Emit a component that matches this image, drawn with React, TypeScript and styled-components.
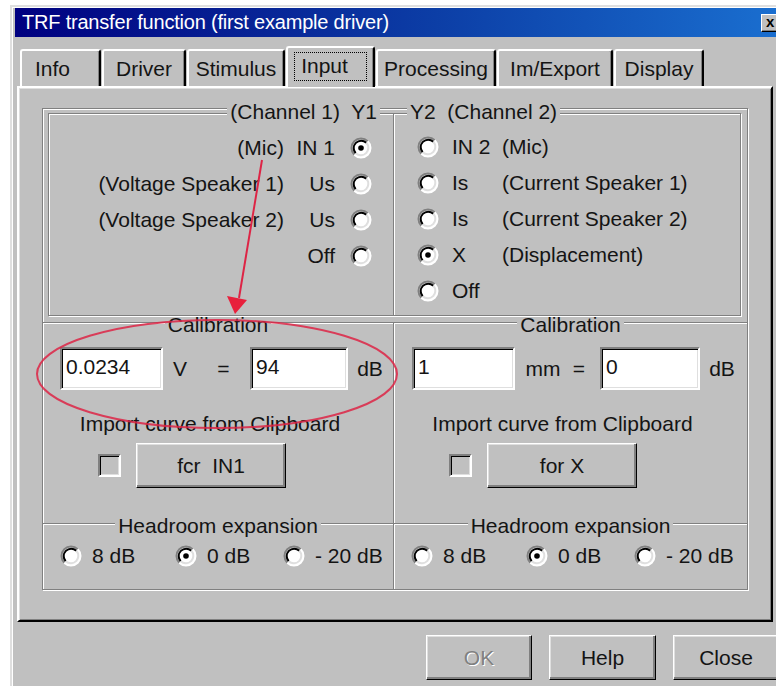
import React from 'react'
import styled, { createGlobalStyle } from 'styled-components'

const FACE = '#c0c0c0'
const SHADOW = '#808080'
const LIGHT = '#dfdfdf'
const INK = '#141414'
const TEXT = '21px'

const GlobalStyle = createGlobalStyle`
  html, body {
    margin: 0;
    padding: 0;
    background: #fff;
    overflow: hidden;
  }
  body {
    font-family: "Liberation Sans", Arial, sans-serif;
    color: ${INK};
  }
`

const Page = styled.div`
  position: relative;
  width: 776px;
  height: 686px;
  overflow: hidden;
`

const Window = styled.div`
  width: 766px;
  height: 680px;
  margin: 5px 0 0 10px;
  padding: 1px 3px;
  background: ${FACE};
  border: 2px solid;
  border-color: ${LIGHT} #000 #000 ${LIGHT};
  box-shadow: inset 1px 1px #fff;
`

const TitleBar = styled.div`
  display: flex;
  align-items: center;
  height: 29px;
  padding: 0 2px 0 7px;
  background: linear-gradient(90deg, #000080 0%, #0c3ea6 55%, #1a6fd0 100%);
  color: #fff;
  font-size: 20px;
  letter-spacing: -0.2px;
`

const CloseBox = styled.div`
  box-sizing: border-box;
  width: 18px;
  height: 18px;
  margin-left: auto;
  display: flex;
  align-items: center;
  justify-content: center;
  background: ${FACE};
  border: 1px solid;
  border-color: #fff #000 #000 #fff;
  box-shadow: inset -1px -1px ${SHADOW};
  color: #000;
  font-size: 15px;
  font-weight: bold;
  line-height: 1;
  padding-bottom: 2px;
`

const TabStrip = styled.div`
  display: flex;
  align-items: flex-end;
  height: 40px;
  margin-top: 9px;
  padding-left: 5px;
`

const Tab = styled.div<{ $w: number; $active?: boolean; $left?: boolean }>`
  box-sizing: border-box;
  position: relative;
  z-index: ${p => (p.$active ? 2 : 0)};
  width: ${p => p.$w}px;
  height: ${p => (p.$active ? 41 : 37)}px;
  margin: 0 1px ${p => (p.$active ? -1 : 0)}px 0;
  padding: 6px 0 0 ${p => (p.$left ? 13 : 0)}px;
  background: ${FACE};
  border: 2px solid;
  border-bottom: none;
  border-color: #fff #000 #000 #fff;
  border-radius: 3px 3px 0 0;
  box-shadow: inset -1px 0 ${SHADOW};
  font-size: ${TEXT};
  line-height: 23px;
  text-align: ${p => (p.$left ? 'left' : 'center')};
  white-space: nowrap;
`

const FocusLabel = styled.span`
  display: inline-block;
  padding: 1px 18px 3px 6px;
  border: 1px dotted #000;
  margin-top: -2px;
`

const TabPage = styled.div`
  box-sizing: border-box;
  width: 756px;
  height: 536px;
  margin-left: 2px;
  padding: 20px 0 0 23px;
  border: 2px solid;
  border-color: #fff #000 #000 #fff;
  box-shadow: inset 1px 1px ${LIGHT}, inset -1px -1px ${SHADOW};
`

const Frame = styled.div`
  box-sizing: border-box;
  width: 706px;
  height: 482px;
  border: 1px solid ${SHADOW};
  box-shadow: inset 1px 1px #fff, 1px 1px #fff;
`

const TopRow = styled.div`
  display: grid;
  grid-template-columns: 345px 348px;
  padding: 4px 6px 0 5px;
`

const GroupBox = styled.div<{ $open?: boolean }>`
  box-sizing: border-box;
  height: 203px;
  border: 1px solid ${SHADOW};
  border-right-width: ${p => (p.$open ? 0 : 1)}px;
  box-shadow: inset 1px 1px #fff, 1px 1px #fff;
`

const Caption = styled.div<{ $align: string; $pad?: number; $tall?: boolean }>`
  display: flex;
  justify-content: ${p => p.$align};
  height: ${p => (p.$tall ? 16 : 12)}px;
  line-height: ${p => (p.$tall ? 16 : 12)}px;
  margin-top: ${p => (p.$tall ? -10 : -4)}px;
  padding: 0 ${p => p.$pad ?? 0}px;
  font-size: ${TEXT};
  white-space: pre;
`

const CaptionText = styled.span`
  background: ${FACE};
  padding: 0 3px;
`

const Choices = styled.div<{ $mirror?: boolean }>`
  padding: ${p => (p.$mirror ? '10px 21px 0 0' : '9px 0 0 23px')};
`

const ChoiceRow = styled.div<{ $mirror?: boolean }>`
  display: flex;
  align-items: center;
  justify-content: ${p => (p.$mirror ? 'flex-end' : 'flex-start')};
  height: 36px;
  font-size: ${TEXT};
  white-space: nowrap;
`

const Signal = styled.span<{ $mirror?: boolean }>`
  width: ${p => (p.$mirror ? 46 : 50)}px;
  margin: ${p => (p.$mirror ? '0 15px 0 5px' : '0 0 0 13px')};
  text-align: ${p => (p.$mirror ? 'right' : 'left')};
`

const RadioIcon = styled.svg`
  flex: none;
  display: block;
`

const SectionGrid = styled.div<{ $h: number; $gap?: number }>`
  display: grid;
  grid-template-columns: 351px 353px;
  height: ${p => p.$h}px;
  margin-top: ${p => p.$gap ?? 0}px;
`

const Section = styled.div<{ $divider?: boolean }>`
  box-sizing: border-box;
  border-top: 1px solid ${SHADOW};
  border-right: ${p => (p.$divider ? `1px solid ${SHADOW}` : 'none')};
  box-shadow: inset 0 1px #fff ${p => (p.$divider ? ', 1px 0 #fff' : '')};
`

const FieldRow = styled.div<{ $cols: string; $pad: number }>`
  display: grid;
  grid-template-columns: ${p => p.$cols};
  align-items: center;
  height: 43px;
  margin-top: 16px;
  padding-left: ${p => p.$pad}px;
  font-size: ${TEXT};
`

const Field = styled.div<{ $w?: number }>`
  box-sizing: border-box;
  justify-self: end;
  width: ${p => (p.$w ? `${p.$w}px` : '100%')};
  height: 43px;
  padding: 6px 4px 0;
  background: #fff;
  border: 2px solid;
  border-color: ${SHADOW} #fff #fff ${SHADOW};
  box-shadow: inset 1px 1px #000, inset -1px -1px ${LIGHT};
  font-size: ${TEXT};
  line-height: 23px;
`

const Unit = styled.span`
  text-align: center;
`

const ImportNote = styled.div`
  margin-top: 22px;
  padding-right: 16px;
  font-size: ${TEXT};
  line-height: 23px;
  text-align: center;
  white-space: nowrap;
`

const ImportRow = styled.div`
  display: flex;
  align-items: center;
  gap: 15px;
  height: 45px;
  margin-top: 8px;
  padding-left: 55px;
`

const CheckBox = styled.div`
  box-sizing: border-box;
  width: 23px;
  height: 23px;
  background: ${FACE};
  border: 2px solid;
  border-color: ${SHADOW} #fff #fff ${SHADOW};
  box-shadow: inset 1px 1px #000, inset -1px -1px ${LIGHT};
`

const PushButton = styled.div<{ $w: number; $disabled?: boolean }>`
  box-sizing: border-box;
  display: flex;
  align-items: center;
  justify-content: center;
  width: ${p => p.$w}px;
  height: 45px;
  background: ${FACE};
  border: 1px solid;
  border-color: #fff #000 #000 #fff;
  box-shadow: inset -2px -2px ${SHADOW}, inset 1px 1px ${LIGHT};
  font-size: ${TEXT};
  white-space: pre;
  color: ${p => (p.$disabled ? SHADOW : INK)};
  text-shadow: ${p => (p.$disabled ? '1px 1px #fff' : 'none')};
`

const LevelRow = styled.div`
  display: grid;
  grid-template-columns: 115px 108px auto;
  align-items: center;
  height: 22px;
  margin-top: 12px;
  padding-left: 17px;
  font-size: ${TEXT};
`

const Level = styled.div`
  display: flex;
  align-items: center;
  gap: 10px;
  white-space: nowrap;
`

const ButtonRow = styled.div`
  display: flex;
  justify-content: flex-end;
  gap: 17px;
  margin-top: 13px;
  padding-right: 2px;
`

const Markup = styled.svg`
  position: absolute;
  top: 0;
  left: 0;
  pointer-events: none;
`

// classic sunken radio: dark arcs top-left, light arcs bottom-right
const Radio: React.FC<{ on?: boolean }> = ({ on }) => (
  <RadioIcon width="22" height="22" viewBox="0 0 22 22">
    <circle cx="11" cy="11" r="9" fill="#fff" />
    <path d="M4.28 17.72A9.5 9.5 0 0 1 17.72 4.28" fill="none" stroke={SHADOW} strokeWidth="2" />
    <path d="M5.7 16.3A7.5 7.5 0 0 1 16.3 5.7" fill="none" stroke="#000" strokeWidth="2" />
    <path d="M17.72 4.28A9.5 9.5 0 0 1 4.28 17.72" fill="none" stroke="#fff" strokeWidth="2" />
    <path d="M16.3 5.7A7.5 7.5 0 0 1 5.7 16.3" fill="none" stroke={LIGHT} strokeWidth="2" />
    {on && <circle cx="11" cy="11" r="2.8" fill="#000" />}
  </RadioIcon>
)

const tabs = [
  { label: 'Info', w: 81, left: true },
  { label: 'Driver', w: 84 },
  { label: 'Stimulus', w: 98 },
  { label: 'Input', w: 89, active: true },
  { label: 'Processing', w: 120 },
  { label: 'Im/Export', w: 116 },
  { label: 'Display', w: 90 },
]

const channel1 = [
  { note: '(Mic)', signal: 'IN 1', on: true },
  { note: '(Voltage Speaker 1)', signal: 'Us' },
  { note: '(Voltage Speaker 2)', signal: 'Us' },
  { note: '', signal: 'Off' },
]

const channel2 = [
  { signal: 'IN 2', note: '(Mic)' },
  { signal: 'Is', note: '(Current Speaker 1)' },
  { signal: 'Is', note: '(Current Speaker 2)' },
  { signal: 'X', note: '(Displacement)', on: true },
  { signal: 'Off', note: '' },
]

const levels = ['8 dB', '0 dB', '- 20 dB']

const Headroom: React.FC<{ divider?: boolean }> = ({ divider }) => (
  <Section $divider={divider}>
    <Caption $align="center">
      <CaptionText>Headroom expansion</CaptionText>
    </Caption>
    <LevelRow>
      {levels.map((l, i) => (
        <Level key={l}>
          <Radio on={i === 1} />
          {l}
        </Level>
      ))}
    </LevelRow>
  </Section>
)

export default function App() {
  return (
    <Page>
      <GlobalStyle />
      <Window>
        <TitleBar>
          TRF transfer function (first example driver)
          <CloseBox>x</CloseBox>
        </TitleBar>

        <TabStrip>
          {tabs.map(t => (
            <Tab key={t.label} $w={t.w} $active={t.active} $left={t.left}>
              {t.active ? <FocusLabel>{t.label}</FocusLabel> : t.label}
            </Tab>
          ))}
        </TabStrip>

        <TabPage>
          <Frame>
            <TopRow>
              <GroupBox $open>
                <Caption $align="flex-end" $pad={13} $tall>
                  <CaptionText>(Channel 1)  Y1</CaptionText>
                </Caption>
                <Choices $mirror>
                  {channel1.map(c => (
                    <ChoiceRow key={c.note + c.signal} $mirror>
                      <span>{c.note}</span>
                      <Signal $mirror>{c.signal}</Signal>
                      <Radio on={c.on} />
                    </ChoiceRow>
                  ))}
                </Choices>
              </GroupBox>
              <GroupBox>
                <Caption $align="flex-start" $pad={13} $tall>
                  <CaptionText>Y2  (Channel 2)</CaptionText>
                </Caption>
                <Choices>
                  {channel2.map(c => (
                    <ChoiceRow key={c.signal + c.note}>
                      <Radio on={c.on} />
                      <Signal>{c.signal}</Signal>
                      <span>{c.note}</span>
                    </ChoiceRow>
                  ))}
                </Choices>
              </GroupBox>
            </TopRow>

            <SectionGrid $h={201} $gap={6}>
              <Section $divider>
                <Caption $align="center">
                  <CaptionText>Calibration</CaptionText>
                </Caption>
                <FieldRow $cols="103px 34px 53px 98px 44px" $pad={17}>
                  <Field>0.0234</Field>
                  <Unit>V</Unit>
                  <Unit>=</Unit>
                  <Field>94</Field>
                  <Unit>dB</Unit>
                </FieldRow>
                <ImportNote>Import curve from Clipboard</ImportNote>
                <ImportRow>
                  <CheckBox />
                  <PushButton $w={150}>fcr  IN1</PushButton>
                </ImportRow>
              </Section>
              <Section>
                <Caption $align="center">
                  <CaptionText>Calibration</CaptionText>
                </Caption>
                <FieldRow $cols="103px 56px 16px 113px 44px" $pad={18}>
                  <Field>1</Field>
                  <Unit>mm</Unit>
                  <Unit>=</Unit>
                  <Field $w={100}>0</Field>
                  <Unit>dB</Unit>
                </FieldRow>
                <ImportNote>Import curve from Clipboard</ImportNote>
                <ImportRow>
                  <CheckBox />
                  <PushButton $w={150}>for X</PushButton>
                </ImportRow>
              </Section>
            </SectionGrid>

            <SectionGrid $h={66}>
              <Headroom divider />
              <Headroom />
            </SectionGrid>
          </Frame>
        </TabPage>

        <ButtonRow>
          <PushButton $w={106} $disabled>OK</PushButton>
          <PushButton $w={107}>Help</PushButton>
          <PushButton $w={106}>Close</PushButton>
        </ButtonRow>
      </Window>

      <Markup width="776" height="686" viewBox="0 0 776 686">
        <g stroke="#dd2445" fill="none" strokeWidth="2">
          <ellipse cx="217" cy="374" rx="180" ry="54" opacity="0.85" />
          <line x1="262" y1="160" x2="239" y2="298" />
        </g>
        <polygon points="227,296 247,300 235,314" fill="#e8203c" />
      </Markup>
    </Page>
  )
}
